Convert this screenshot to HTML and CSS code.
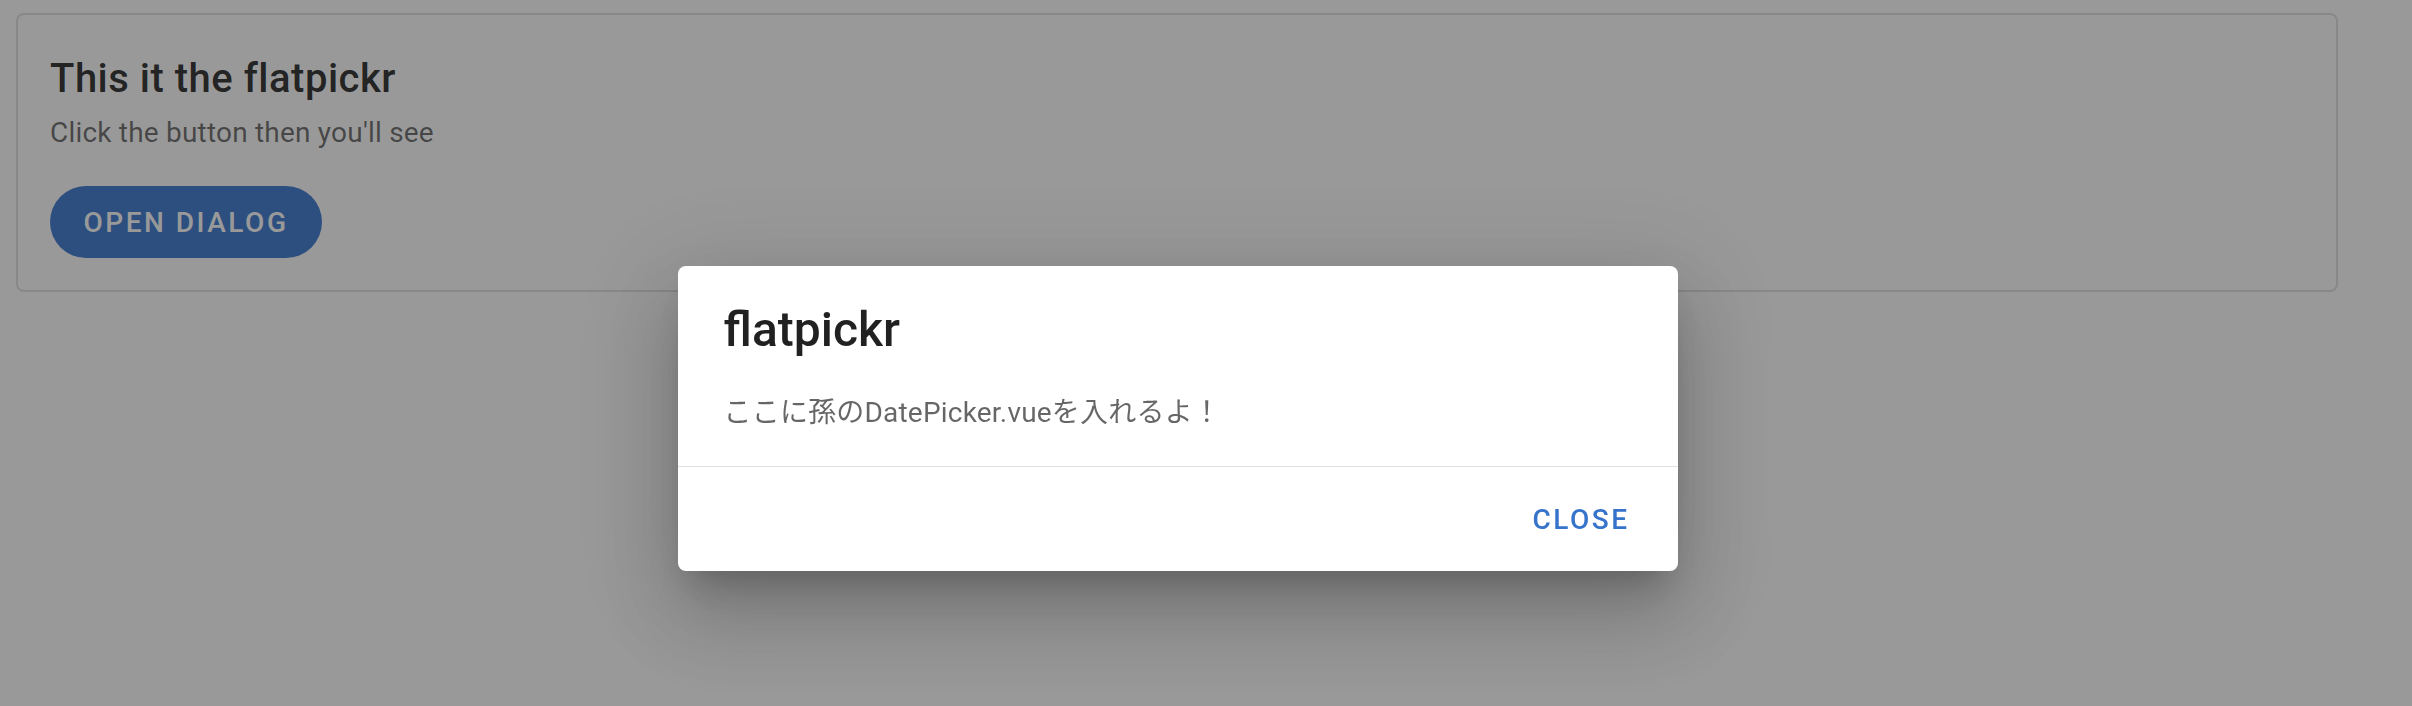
FILE: index.html
```html
<!DOCTYPE html>
<html lang="ja">
<head>
<meta charset="utf-8">
<title>flatpickr</title>
<link rel="stylesheet" href="styles.css">
</head>
<body>
  <div class="app">
    <div class="card">
      <h2 class="card-title">This it the flatpickr</h2>
      <p class="card-subtitle">Click the button then you'll see</p>
      <button class="btn btn-primary" type="button">Open Dialog</button>
    </div>
  </div>

  <div class="overlay"></div>
  <div class="dialog-wrap">
    <div class="dialog">
      <h3 class="dialog-title">flatpickr</h3>
      <p class="dialog-text">ここに孫のDatePicker.vueを入れるよ！</p>
      <hr class="divider">
      <div class="dialog-actions">
        <button class="btn btn-text" type="button">Close</button>
      </div>
    </div>
  </div>
</body>
</html>
```
FILE: styles.css
```css
* { box-sizing: border-box; }

html, body {
  margin: 0;
  padding: 0;
  background: #ffffff;
  font-family: Roboto, "Noto Sans CJK JP", "Liberation Sans", sans-serif;
  -webkit-font-smoothing: antialiased;
}

body {
  width: 2412px;
  height: 706px;
  overflow: hidden;
}

.app {
  padding: 13px 74px 0 16px;
}

.card {
  background: #fff;
  border: 2px solid rgba(0, 0, 0, 0.12);
  border-radius: 8px;
  padding: 32px;
  display: flex;
  flex-direction: column;
  align-items: flex-start;
}

.card-title {
  margin: 0;
  font-size: 40px;
  font-weight: 500;
  line-height: 64px;
  letter-spacing: 0.0125em;
  color: rgba(0, 0, 0, 0.87);
}

.card-subtitle {
  margin: 0 0 31px;
  font-size: 28px;
  line-height: 44px;
  letter-spacing: 0.0071428571em;
  color: rgba(0, 0, 0, 0.6);
}

.btn {
  font-family: Roboto, "Liberation Sans", sans-serif;
  font-size: 28px;
  font-weight: 500;
  letter-spacing: 0.0892857143em;
  text-transform: uppercase;
  height: 72px;
  padding: 0 32px;
  border: 0;
  background: transparent;
  cursor: pointer;
  display: inline-flex;
  align-items: center;
  justify-content: center;
}

.btn-primary {
  background: #3676d0;
  color: #fff;
  border-radius: 36px;
  width: 272px;
}

.btn-text {
  color: #3673cb;
  border-radius: 8px;
}

.overlay {
  position: fixed;
  inset: 0;
  background: rgba(33, 33, 33, 0.46);
}

.dialog-wrap {
  position: fixed;
  inset: 0;
  padding: 266px 57px 0 0;
  display: flex;
  justify-content: center;
  align-items: flex-start;
}

.dialog {
  width: 1000px;
  background: #fff;
  border-radius: 8px;
  box-shadow:
    0 22px 30px -14px rgba(0, 0, 0, 0.2),
    0 48px 76px 6px rgba(0, 0, 0, 0.14),
    0 18px 92px 16px rgba(0, 0, 0, 0.12);
}

.dialog-title {
  margin: 0;
  padding: 32px 48px 0 46px;
  font-size: 48px;
  font-weight: 500;
  line-height: 64px;
  color: rgba(0, 0, 0, 0.87);
}

.dialog-text {
  margin: 0;
  padding: 29px 48px 31px 46px;
  font-size: 28px;
  line-height: 44px;
  letter-spacing: 0.0071428571em;
  color: rgba(0, 0, 0, 0.6);
}

.divider {
  margin: 0;
  border: 0;
  border-top: 1px solid rgba(0, 0, 0, 0.12);
}

.dialog-actions {
  display: flex;
  justify-content: flex-end;
  padding: 16px;
}
```
